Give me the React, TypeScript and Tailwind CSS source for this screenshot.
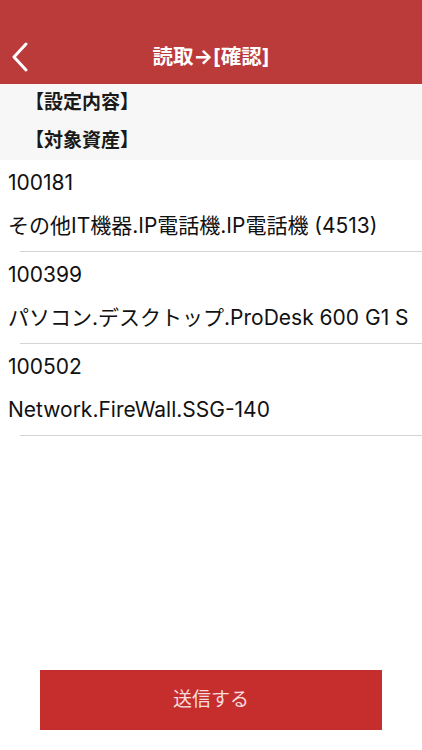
import React from "react";

const font = { fontFamily: 'Inter, "Noto Sans CJK JP", sans-serif' };

const items = [
  { id: "100181", name: "その他IT機器.IP電話機.IP電話機 (4513)" },
  { id: "100399", name: "パソコン.デスクトップ.ProDesk 600 G1 S" },
  { id: "100502", name: "Network.FireWall.SSG-140" },
];

export default function App() {
  return (
    <div className="flex min-h-[750px] w-[422px] flex-col bg-white" style={font}>
      <div className="h-[84px] bg-[#bb3a3a] pt-[30px]">
        <div className="relative flex h-[54px] items-center justify-center">
          <svg
            className="absolute left-[10px] top-[12px]"
            width="20"
            height="30"
            viewBox="0 0 20 30"
            fill="none"
          >
            <path d="M16 2 L4 15 L16 28" stroke="white" strokeWidth="3" strokeLinecap="round" strokeLinejoin="round" />
          </svg>
          <span className="text-[20.5px] font-bold text-white">読取→[確認]</span>
        </div>
      </div>
      <div className="h-[76px] bg-[#f7f7f7] pl-[25px]">
        <div className="flex h-[38px] items-center text-[19px] font-bold text-[#1a1a1a]">【設定内容】</div>
        <div className="flex h-[38px] items-center text-[19px] font-bold text-[#1a1a1a]">【対象資産】</div>
      </div>
      <div className="flex flex-col">
        {items.map((it) => (
          <div key={it.id} className="flex flex-col">
            <div className="flex h-[46px] items-center pl-[8px] text-[21px] text-[#111]">{it.id}</div>
            <div className="flex h-[40px] items-center whitespace-nowrap pl-[8px] text-[21px] text-[#111]">{it.name}</div>
            <div className="h-[5px]" />
            <div className="ml-[20px] h-px bg-[#d4d4d4]" />
          </div>
        ))}
      </div>
      <div className="flex-1" />
      <div className="px-[40px] pb-[20px]">
        <button className="flex h-[60px] w-full items-center justify-center bg-[#c62e2e] text-[19px] text-[#f6dcdc]">
          送信する
        </button>
      </div>
    </div>
  );
}
